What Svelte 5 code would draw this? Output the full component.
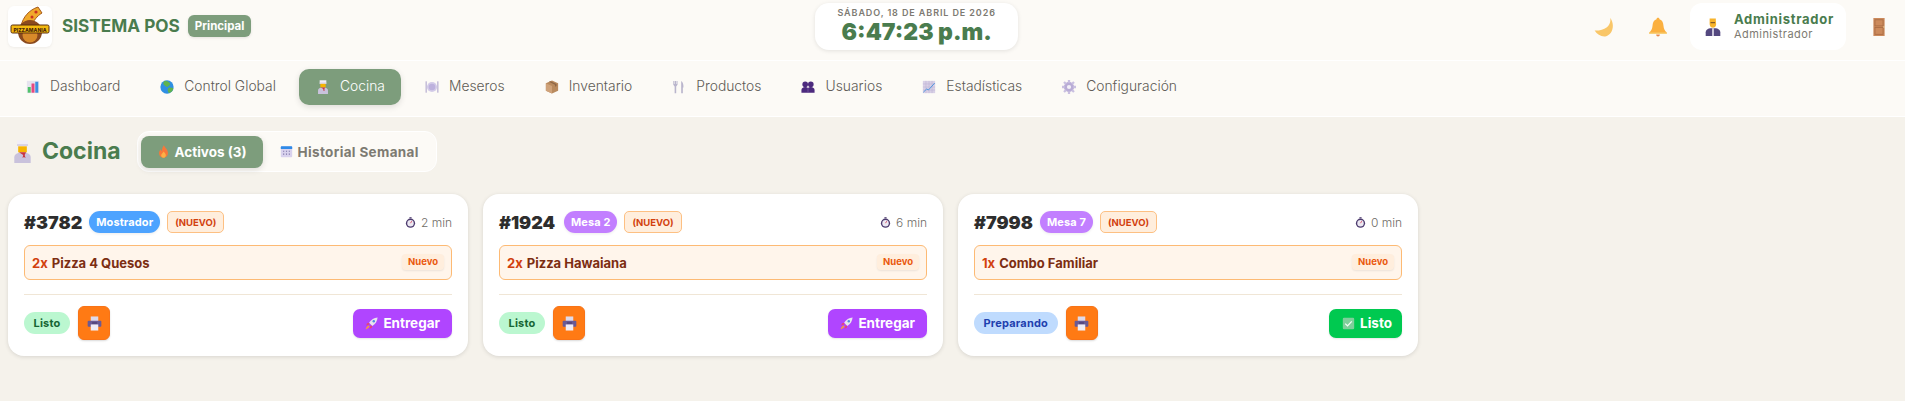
<script>
  const nav = [
    { label: 'Dashboard', icon: 'chart' },
    { label: 'Control Global', icon: 'globe' },
    { label: 'Cocina', icon: 'chef', active: true },
    { label: 'Meseros', icon: 'plate' },
    { label: 'Inventario', icon: 'box' },
    { label: 'Productos', icon: 'cutlery' },
    { label: 'Usuarios', icon: 'users' },
    { label: 'Estadísticas', icon: 'trend' },
    { label: 'Configuración', icon: 'gear' }
  ];
  const orders = [
    { id: '#3782', place: 'Mostrador', tone: 'blue', time: '2 min', qty: '2x', item: 'Pizza 4 Quesos', status: 'Listo', st: 'done', action: 'Entregar', ai: 'rocket', ac: 'purple' },
    { id: '#1924', place: 'Mesa 2', tone: 'violet', time: '6 min', qty: '2x', item: 'Pizza Hawaiana', status: 'Listo', st: 'done', action: 'Entregar', ai: 'rocket', ac: 'purple' },
    { id: '#7998', place: 'Mesa 7', tone: 'violet', time: '0 min', qty: '1x', item: 'Combo Familiar', status: 'Preparando', st: 'prep', action: 'Listo', ai: 'check', ac: 'green' }
  ];
</script>

{#snippet icon(name, size)}
  <svg class="ico" width={size} height={size} viewBox="0 0 16 16" aria-hidden="true">
    {#if name === 'chart'}
      <rect x="1" y="1" width="14" height="14" fill="#e6e3ee" />
      <rect x="2" y="8" width="3.400" height="6.500" fill="#4fc26a" />
      <rect x="6.300" y="4" width="3.400" height="10.500" fill="#e8487f" />
      <rect x="10.600" y="2" width="3.400" height="12.500" fill="#3f8fe0" />
    {:else if name === 'globe'}
      <circle cx="8" cy="8" r="7.600" fill="#2f8fe3" />
      <path d="M5.500 .8c2.500 0 5 1.400 6 3.200.6 1.300-1 2.200-2 3-.8 1.300-2 .8-3 0-1.300-.8-3-1.800-2.800-3.600.2-1 1-1.900 1.800-2.600zM9.500 9c1.800-.6 4-.5 5.800.3-.4 2.400-2 4.700-4.800 5.600-1.800-1-2.200-4.400-1-5.900z" fill="#5fb34f" />
    {:else if name === 'chef'}
      <path d="M4.200.3h7.600v4.200H4.200z" fill="#f1eef6" />
      <rect x="4.200" y="3" width="7.600" height="1" fill="#cfc8de" />
      <rect x="5" y="4.400" width="6" height="4.200" fill="#f7b500" />
      <path d="M2.300 16v-4c0-2 2-3.300 5.700-3.300s5.700 1.300 5.700 3.300v4z" fill="#c9c2dc" />
      <path d="M5.500 8.600h5l-1 1.800.6 2.200-1.100-.8-1 .8.500-2.200z" fill="#c8343f" />
    {:else if name === 'plate'}
      <rect x=".6" y="1.500" width="1.500" height="13" fill="#bdb4d4" />
      <rect x="13.900" y="1.500" width="1.500" height="13" fill="#bdb4d4" />
      <circle cx="8" cy="8" r="5.800" fill="#d3cbe8" />
      <circle cx="8" cy="8" r="3.700" fill="#bdb1dd" />
    {:else if name === 'box'}
      <path d="M8 .5l7 3.200v8.700L8 15.500 1 12.400V3.700z" fill="#b98a5e" />
      <path d="M8 6.800v8.700L1 12.400V3.700z" fill="#cfa27a" />
      <path d="M4.500 2.100l6.900 3.200v2.400l1.700-.8V4.500L6.200 1.300z" fill="#8d6545" />
    {:else if name === 'cutlery'}
      <path d="M1.500 1v4.500L3 7.500V15h1.800V7.500l1.500-2V1H5.200v3.500h-.6V1H3.300v3.500h-.6V1z" fill="#b9b5cc" />
      <path d="M10.500 1c2 1 2.700 4 2.600 7.500h-.7V15h-1.900z" fill="#b9b5cc" />
    {:else if name === 'users'}
      <circle cx="4.800" cy="5" r="3.200" fill="#4c2a7e" />
      <circle cx="11.200" cy="5" r="3.200" fill="#4c2a7e" />
      <path d="M.5 14.500v-3C.5 9.500 2.300 8 4.800 8c1.400 0 2.500.4 3.200 1 .7-.6 1.800-1 3.200-1 2.500 0 4.300 1.500 4.300 3.500v3z" fill="#4c2a7e" />
      <rect x="7.600" y="9" width=".8" height="5.500" fill="#7b5fa8" />
    {:else if name === 'trend'}
      <rect x="1" y="1" width="14" height="14" fill="#d8d0e6" />
      <path d="M1 4.500h14M1 8h14M1 11.500h14M4.500 1v14M8 1v14M11.500 1v14" stroke="#bcb1d2" stroke-width=".6" />
      <path d="M1.500 14l3.800-3.700 2.200 1L14.500 3.500" fill="none" stroke="#3f90e0" stroke-width="1" />
    {:else if name === 'gear'}
      <circle cx="8" cy="8" r="5.800" fill="#b5a8d2" />
      <path d="M8 0v16M0 8h16M2.300 2.300l11.400 11.400M13.700 2.300L2.300 13.700" stroke="#c9bfe0" stroke-width="2.600" />
      <circle cx="8" cy="8" r="5" fill="#b9acd6" />
      <circle cx="8" cy="8" r="2.400" fill="#f3f0f7" />
    {:else if name === 'moon'}
      <path d="M13 .5c1 6-3.500 10.500-12.500 10.300 2 3.200 5 5 8.500 4.700 6-1 8-9.500 4-15z" fill="#f9c668" />
    {:else if name === 'bell'}
      <path d="M8 .5c.8 0 1.200.5 1.200 1.200 2.400.8 3 2.800 3.200 5.400.2 2.300 1.100 4 2.600 5.200v1H1v-1c1.500-1.200 2.400-2.900 2.600-5.200.2-2.600.8-4.600 3.200-5.400C6.800 1 7.200.5 8 .5z" fill="#fbb040" />
      <path d="M6.500 14h3A1.500 1.500 0 0 1 8 15.500 1.500 1.500 0 0 1 6.500 14z" fill="#e88a4a" />
      <rect x="1" y="12.500" width="14" height=".9" fill="#f6d57d" />
    {:else if name === 'admin'}
      <path d="M5 .5h5.500V2l.3 3.800c-.3 1.900-1.400 2.900-2.800 2.900-1.500 0-2.800-1.100-3-3.200z" fill="#f7b32b" />
      <rect x="5.800" y="3.800" width="4" height=".8" fill="#5c3d26" />
      <path d="M1.500 16v-3.300c0-2 1.500-3.300 3.800-3.700h5.400c2.300.4 3.800 1.700 3.800 3.700V16z" fill="#54487f" />
      <path d="M7.300 9h1.400v7H7.300z" fill="#e9e6f2" />
    {:else if name === 'door'}
      <rect x="3" y="0" width="10" height="16" fill="#cc8a5c" />
      <rect x="4.400" y="1.600" width="7.200" height="5.400" fill="none" stroke="#a86a42" stroke-width=".7" />
      <rect x="4.400" y="8.500" width="7.200" height="6" fill="none" stroke="#a86a42" stroke-width=".7" />
      <rect x="11.800" y="7.500" width="1.200" height="1" fill="#f0d9a8" />
    {:else if name === 'fire'}
      <path d="M8.500.3c.7 2.700 5 4.800 5 9.600 0 3.400-2.500 5.800-5.500 5.800s-5.500-2.400-5.500-5.600c0-2.300 1-3.800 2.300-5 .1 1 .5 1.900 1.300 2.400C6 5 6.900 2.200 8.500.3z" fill="#f7783a" />
      <path d="M8.300 8c.4 1.300 2.600 2 2.600 4.500 0 1.800-1.300 3.200-2.900 3.200s-2.900-1.300-2.900-3c0-1.600 2.100-2.700 3.200-4.700z" fill="#fcb045" />
    {:else if name === 'calendar'}
      <rect x="1" y="1.500" width="14" height="13.500" rx="1.200" fill="#d9d2ee" />
      <path d="M1 2.700c0-.7.500-1.200 1.200-1.200h11.600c.7 0 1.200.5 1.200 1.200v2.300H1z" fill="#2f8ae8" />
      <path d="M3.800 7h1.400v1.400H3.800zM7.300 7h1.400v1.400H7.300zM10.800 7h1.400v1.400h-1.400zM3.800 10.500h1.400v1.400H3.800zM7.300 10.500h1.400v1.400H7.300zM10.800 10.500h1.400v1.400h-1.400z" fill="#7f76a8" />
    {:else if name === 'watch'}
      <rect x="6.400" y=".3" width="3.200" height="1.700" fill="#4c3a6e" />
      <circle cx="8" cy="9" r="6.700" fill="#4c3a6e" />
      <circle cx="8" cy="9" r="4.700" fill="#ece8f2" />
      <path d="M8 9l1.800-3" stroke="#d8405a" stroke-width="1.200" />
    {:else if name === 'printer'}
      <rect x="4" y=".5" width="8" height="5" fill="#ded9ea" />
      <rect x=".7" y="5" width="14.600" height="6.500" rx="1" fill="#6a5a94" />
      <rect x="4" y="9" width="8" height="6.500" fill="#f0edf6" />
      <rect x="5.400" y="7" width="5.200" height=".9" fill="#3f3464" />
    {:else if name === 'rocket'}
      <path d="M15.500.5C11 1 7.500 3 5 7l4 4c4-2.500 6-6 6.500-10.500z" fill="#e8e3ef" />
      <circle cx="10.800" cy="5.200" r="1.500" fill="#4f8ee0" />
      <path d="M5 7l-2.500.8-1 2.700 4-1.200zM9 11l-.8 2.500-2.700 1 1.200-4z" fill="#e2457a" />
      <path d="M4.500 10.500c-1.500.4-3.200 2.200-3.800 4.800 2.600-.6 4.400-2.300 4.800-3.800z" fill="#f79a3e" />
    {:else if name === 'check'}
      <rect x="1" y="1" width="14" height="14" rx="1.500" fill="#7fcf9a" />
      <path d="M4 8.200l2.800 2.800L12 5.400" fill="none" stroke="#f4fff7" stroke-width="1.600" />
    {/if}
  </svg>
{/snippet}

<div class="page">
  <header class="top">
    <div class="brand">
      <div class="logo">
        <svg width="44" height="41" viewBox="0 0 44 41" aria-hidden="true">
          <path d="M13 20C15 11 21 4 30 1l4 6c-5 3-9 8-10 13z" fill="#f0a92c" stroke="#a4591b" stroke-width="1" />
          <circle cx="28" cy="6" r="1.600" fill="#c9331f" /><circle cx="24" cy="11" r="1.500" fill="#c9331f" /><circle cx="20" cy="16" r="1.300" fill="#c9331f" />
          <circle cx="22" cy="26" r="12" fill="#8a4a1f" />
          <circle cx="22" cy="29" r="7.500" fill="#d88a2a" />
          <rect x="3" y="19" width="38" height="8" rx="1.500" fill="#f2b90f" stroke="#5a2f10" stroke-width="1" />
          <text class="logotext" x="22" y="25.500" text-anchor="middle">PIZZAMANIA</text>
        </svg>
      </div>
      <span class="title">SISTEMA POS</span>
      <span class="branch">Principal</span>
    </div>
    <div class="clock">
      <div class="date">SÁBADO, 18 DE ABRIL DE 2026</div>
      <div class="time">6:47:23 p.m.</div>
    </div>
    <div class="tools">
      <span class="tool moon">{@render icon('moon', 20)}</span>
      <span class="tool bell">{@render icon('bell', 20)}</span>
      <div class="user">
        {@render icon('admin', 18)}
        <div class="who">
          <div class="uname">Administrador</div>
          <div class="urole">Administrador</div>
        </div>
      </div>
      <span class="tool door">{@render icon('door', 18)}</span>
    </div>
  </header>

  <nav class="nav">
    {#each nav as n}
      <a class="nav-item" class:active={n.active}>{@render icon(n.icon, 14)}<span>{n.label}</span></a>
    {/each}
  </nav>

  <main class="main">
    <div class="head">
      <h1>{@render icon('chef', 23)}<span>Cocina</span></h1>
      <div class="tabs">
        <button class="tab on">{@render icon('fire', 13)}Activos (3)</button>
        <button class="tab">{@render icon('calendar', 13)}Historial Semanal</button>
      </div>
    </div>
    <div class="grid">
      {#each orders as o}
        <article class="card">
          <div class="row1">
            <span class="oid">{o.id}</span>
            <span class="place {o.tone}">{o.place}</span>
            <span class="new">(NUEVO)</span>
            <span class="elapsed">{@render icon('watch', 11)}{o.time}</span>
          </div>
          <div class="item">
            <span class="qty">{o.qty}</span>
            <span class="iname">{o.item}</span>
            <span class="tag">Nuevo</span>
          </div>
          <div class="foot">
            <span class="status {o.st}">{o.status}</span>
            <button class="print">{@render icon('printer', 15)}</button>
            <button class="act {o.ac}">{@render icon(o.ai, 13)}{o.action}</button>
          </div>
        </article>
      {/each}
    </div>
  </main>
</div>

<style>
  :global(body) {
    margin: 0;
    background: #f5f2eb;
    font-family: Inter, "Noto Sans", sans-serif;
  }
  .page { min-height: 401px; background: #f5f2eb; color: #2d2d2d; }
  .ico { display: block; flex: none; }
  button { font-family: inherit; border: 0; cursor: pointer; }

  .top {
    height: 61px;
    box-sizing: border-box;
    padding: 3px 0 10px 8px;
    background: #fcfaf6;
    border-bottom: 1px solid #fff;
    display: flex;
    align-items: center;
    justify-content: space-between;
  }
  .brand { display: flex; align-items: center; }
  .logo {
    width: 44px; height: 41px; background: #fff; border-radius: 6px;
    box-shadow: 0 1px 3px rgba(0,0,0,.06);
  }
  .logo svg { display: block; }
  .logotext { font-size: 5px; font-weight: 800; fill: #4a1f0a; }
  .title { margin-left: 10px; font-size: 17.200px; font-weight: 700; color: #4a7c4e; padding-bottom: 2px; }
  .branch {
    margin-left: 8px; height: 22px; padding: 0 7px; display: flex; align-items: center; margin-bottom: 2px;
    background: #7d9d7c; color: #fff; font-size: 11.500px; font-weight: 700; border-radius: 6px;
    box-shadow: 0 1px 3px rgba(0,0,0,.1);
  }
  .clock {
    width: 203px; height: 47px; box-sizing: border-box; padding-top: 4px;
    background: #fff; border-radius: 14px; box-shadow: 0 1px 4px rgba(0,0,0,.1);
    text-align: center;
  }
  .date { font-size: 9px; font-weight: 600; letter-spacing: .9px; color: #7d7a72; line-height: 12px; }
  .time { font-size: 23px; font-weight: 900; color: #4a7c4e; line-height: 26px; }
  .tools { display: flex; align-items: center; padding: 0 17px 0 12px; }
  .moon { margin-right: 34px; }
  .bell { margin-right: 22px; }
  .door { margin-left: 24px; }
  .user {
    width: 156px; height: 47px; box-sizing: border-box; background: #fff; border-radius: 12px;
    display: flex; align-items: center; gap: 12px; padding-left: 14px;
  }
  .uname { font-size: 13px; font-weight: 700; color: #4a7c4e; line-height: 16px; letter-spacing: .7px; }
  .urole { font-size: 11px; font-weight: 400; color: #7d7a72; line-height: 15px; letter-spacing: .45px; }

  .nav {
    height: 56px; background: #fcfaf6; border-bottom: 1px solid #fff;
    display: flex; align-items: flex-start; gap: 7px; padding: 8px 0 0 9px; box-sizing: border-box;
  }
  .nav-item {
    display: flex; align-items: center; gap: 9px; height: 36px; padding: 0 16px; border-radius: 10px;
    font-size: 13.850px; font-weight: 300; color: #5f5c56;
  }
  .nav-item .ico { margin: 0 1px; }
  .nav-item span { padding-bottom: 2px; }
  .nav-item.active { background: #7d9d7c; color: #fff; box-shadow: 0 2px 6px rgba(0,0,0,.12); }

  .main { padding: 14px 12px 0 8px; }
  .head { display: flex; align-items: center; height: 41px; }
  h1 { margin: 0 0 0 3px; display: flex; align-items: center; gap: 8px; font-size: 23px; font-weight: 700; color: #4a7c4e; }
  h1 span { padding-bottom: 2px; }
  .tabs {
    margin-left: 16px; height: 41px; width: 300px; box-sizing: border-box; padding: 4px 3px;
    background: #fcfaf6; border: 1px solid #fff; border-radius: 12px; display: flex; align-items: center;
  }
  .tab {
    height: 32px; display: flex; align-items: center; justify-content: center; gap: 5px;
    background: transparent; font-size: 13.500px; font-weight: 700; color: #7d7a72; border-radius: 8px;
    padding: 0 0 0 17px; letter-spacing: .35px;
  }
  .tab.on { background: #7d9d7c; color: #fff; width: 122px; padding: 0; letter-spacing: 0; box-shadow: 0 2px 6px rgba(0,0,0,.12); }

  .grid { display: grid; grid-template-columns: repeat(4, 1fr); gap: 15px; margin-top: 22px; }
  .card {
    height: 162px; box-sizing: border-box; background: #fff; border-radius: 16px; padding: 16px;
    box-shadow: 0 1px 4px rgba(0,0,0,.12);
  }
  .row1 { display: flex; align-items: center; height: 22px; margin-top: 1px; }
  .oid { font-size: 18px; font-weight: 900; color: #2d2d2d; min-width: 58px; }
  .place {
    margin-left: 7px; height: 22px; padding: 0 7px; display: flex; align-items: center; border-radius: 11px;
    font-size: 11px; font-weight: 700; color: #fff; letter-spacing: .1px; box-shadow: 0 1px 3px rgba(0,0,0,.08);
  }
  .place.blue { background: #4da3ff; }
  .place.violet { background: #c27fff; }
  .new {
    margin-left: 7px; height: 22px; box-sizing: border-box; padding: 0 7px; display: flex; align-items: center;
    background: #ffeedd; border: 1px solid #fdc083; border-radius: 5px; color: #d2410e; font-size: 9.500px; font-weight: 700;
  }
  .elapsed { margin-left: auto; display: flex; align-items: center; gap: 5px; font-size: 12px; font-weight: 300; color: #6f6c66; }

  .item {
    margin-top: 12px; height: 35px; box-sizing: border-box; background: #fff5eb; border: 1px solid #fdba74; border-radius: 6px;
    display: flex; align-items: center; padding: 0 7px; font-size: 13px; font-weight: 700; color: #7c2d12;
  }
  .qty { color: #d2410e; margin-right: 4px; }
  .tag {
    margin-left: auto; height: 16px; padding: 0 6px; display: flex; align-items: center; background: #ffeedd; color: #ea580c;
    font-size: 9.500px; font-weight: 700; border-radius: 4px; box-shadow: 0 1px 2px rgba(0,0,0,.08); margin-top: -2px;
  }
  .foot {
    margin-top: 14px; border-top: 1px solid #f0e6d6; padding-top: 11px; display: flex; align-items: center; height: 34px;
  }
  .status { height: 22px; padding: 0 9.500px; display: flex; align-items: center; border-radius: 11px; font-size: 11px; font-weight: 700; letter-spacing: .2px; }
  .status.done { background: #bbf7d0; color: #166534; }
  .status.prep { background: #bfdbfe; color: #1e40af; }
  .print {
    margin-left: 8px; width: 32px; height: 34px; border-radius: 6px; background: #ff7a14; border: 1px solid #f97316;
    display: flex; align-items: center; justify-content: center; padding: 0; box-shadow: 0 1px 2px rgba(0,0,0,.15);
  }
  .act {
    margin-left: auto; height: 29px; padding: 0 12px; display: flex; align-items: center; gap: 5px;
    border-radius: 7px; color: #fff; font-size: 13.500px; font-weight: 700; box-shadow: 0 1px 2px rgba(0,0,0,.1);
  }
  .act.purple { background: #b045ff; }
  .act.green { background: #00c950; padding: 0 10px 0 13px; }
</style>
